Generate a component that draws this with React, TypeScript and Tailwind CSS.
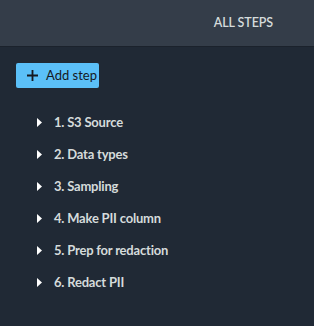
import React from "react";

const steps = [
  "1. S3 Source",
  "2. Data types",
  "3. Sampling",
  "4. Make PII column",
  "5. Prep for redaction",
  "6. Redact PII",
];

const Caret = () => (
  <svg viewBox="0 0 5 9" className="w-[5px] h-[9px] text-white" fill="currentColor">
    <path d="M0 0 L5 4.5 L0 9 Z" />
  </svg>
);

export default function App() {
  return (
    <div className="w-[314px] h-[326px] bg-[#202935] font-['Lato',sans-serif] overflow-hidden">
      {/* Header */}
      <div className="h-[47px] bg-[#343d49] border-b border-[#1b222c] flex items-center justify-end pr-[41px]">
        <span className="text-[12.5px] font-semibold text-[#d5dbdb] tracking-[-0.1px]">ALL STEPS</span>
      </div>

      <div className="pl-4 pt-4">
        <button className="h-[25px] w-[83px] bg-[#5bc0f8] rounded-[2px] flex items-center gap-[8px] pl-[11px] text-[13px] text-[#16191f]">
          <svg viewBox="0 0 12 12" className="w-[11px] h-[11px]" stroke="#16191f" strokeWidth="2">
            <path d="M6 0 V12 M0 6 H12" />
          </svg>
          <span>Add step</span>
        </button>

        <ul className="mt-[25px] flex flex-col gap-[13px] pl-[21px]">
          {steps.map((s) => (
            <li key={s} className="flex items-center gap-[12px] h-[19px]">
              <Caret />
              <span className="text-[13px] font-bold text-[#d5dbdb] tracking-[-0.2px]">{s}</span>
            </li>
          ))}
        </ul>
      </div>
    </div>
  );
}
